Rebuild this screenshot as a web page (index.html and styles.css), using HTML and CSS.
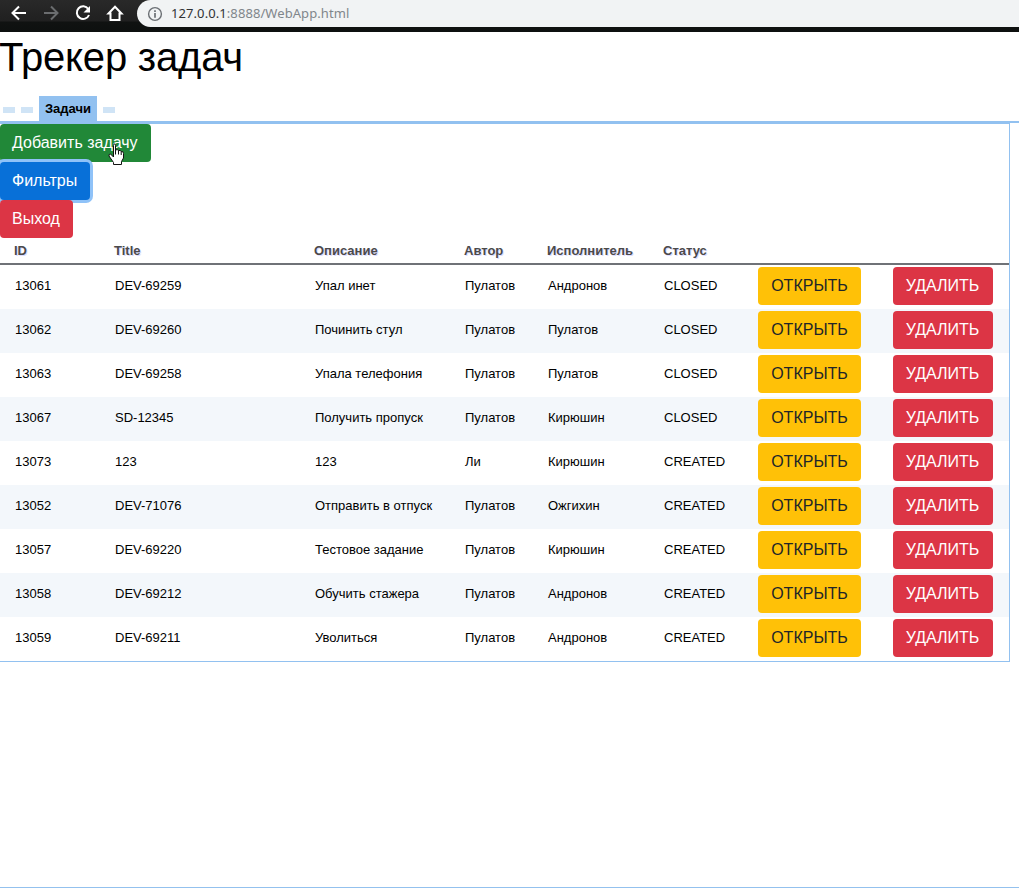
FILE: index.html
```html
<!DOCTYPE html>
<html lang="ru">
<head>
<meta charset="utf-8">
<title>Трекер задач</title>
<link rel="stylesheet" href="styles.css">
</head>
<body>
<header class="browser">
  <svg class="nav" width="137" height="27" viewBox="0 0 137 27" fill="none" stroke="#fff" stroke-width="2">
    <path d="M26 13H13M19 6.500L12.500 13L19 19.500"/>
    <path stroke="#6b6d6f" d="M44 13H57M51 6.500L57.500 13L51 19.500"/>
    <path d="M88.300 9A6.300 6.300 0 1 0 89 15"/>
    <path fill="#fff" stroke="none" d="M90 6V12.500H83.500Z"/>
    <path d="M108.500 13.500H110.500V20H119.500V13.500H121.500L115 6.800Z"/>
  </svg>
  <div class="address">
    <svg width="16" height="16" viewBox="0 0 16 16" fill="none" stroke="#6b6f74"><circle cx="8" cy="8" r="6.400" stroke-width="1.400"/><path stroke-width="1.700" d="M8 7V11.700M8 4.300V6"/></svg>
    <span class="url"><b>127.0.0.1</b>:8888/WebApp.html</span>
  </div>
</header>
<h1 class="title">Трекер задач</h1>
<main class="content">
  <nav class="tabs"><i class="stub"></i><i class="stub"></i><span class="tab">Задачи</span><i class="stub"></i></nav>
  <section class="panel">
    <div class="actions">
      <button class="btn add">Добавить задачу</button>
      <button class="btn filter">Фильтры</button>
      <button class="btn danger">Выход</button>
      <svg class="cursor" width="18" height="23" viewBox="0 0 18 23" fill="#fff" stroke="#111" stroke-width="1"><path d="M5.500 14V2.500Q5.500 1 6.500 1T7.500 2.500V7Q9.500 6 10.500 7.500Q12.500 7 13.200 8.500Q15.500 8 15.500 10.500V15L13.500 18.500V21.500H5.500V19.500L1 13Q0.500 11 2.500 11L5.500 14M7.500 7V11.500M10.500 7.500V11.500M13.200 8.500V12"/></svg>
    </div>
    <table class="tasks">
      <colgroup><col class="c-id"><col class="c-title"><col class="c-desc"><col class="c-author"><col class="c-worker"><col class="c-status"><col class="c-open"><col></colgroup>
      <thead><tr><th>ID</th><th>Title</th><th>Описание</th><th>Автор</th><th>Исполнитель</th><th>Статус</th><th></th><th></th></tr></thead>
      <tbody>
        <tr><td>13061</td><td>DEV-69259</td><td>Упал инет</td><td>Пулатов</td><td>Андронов</td><td>CLOSED</td><td><button class="btn open">ОТКРЫТЬ</button></td><td><button class="btn danger remove">УДАЛИТЬ</button></td></tr>
        <tr><td>13062</td><td>DEV-69260</td><td>Починить стул</td><td>Пулатов</td><td>Пулатов</td><td>CLOSED</td><td><button class="btn open">ОТКРЫТЬ</button></td><td><button class="btn danger remove">УДАЛИТЬ</button></td></tr>
        <tr><td>13063</td><td>DEV-69258</td><td>Упала телефония</td><td>Пулатов</td><td>Пулатов</td><td>CLOSED</td><td><button class="btn open">ОТКРЫТЬ</button></td><td><button class="btn danger remove">УДАЛИТЬ</button></td></tr>
        <tr><td>13067</td><td>SD-12345</td><td>Получить пропуск</td><td>Пулатов</td><td>Кирюшин</td><td>CLOSED</td><td><button class="btn open">ОТКРЫТЬ</button></td><td><button class="btn danger remove">УДАЛИТЬ</button></td></tr>
        <tr><td>13073</td><td>123</td><td>123</td><td>Ли</td><td>Кирюшин</td><td>CREATED</td><td><button class="btn open">ОТКРЫТЬ</button></td><td><button class="btn danger remove">УДАЛИТЬ</button></td></tr>
        <tr><td>13052</td><td>DEV-71076</td><td>Отправить в отпуск</td><td>Пулатов</td><td>Ожгихин</td><td>CREATED</td><td><button class="btn open">ОТКРЫТЬ</button></td><td><button class="btn danger remove">УДАЛИТЬ</button></td></tr>
        <tr><td>13057</td><td>DEV-69220</td><td>Тестовое задание</td><td>Пулатов</td><td>Кирюшин</td><td>CREATED</td><td><button class="btn open">ОТКРЫТЬ</button></td><td><button class="btn danger remove">УДАЛИТЬ</button></td></tr>
        <tr><td>13058</td><td>DEV-69212</td><td>Обучить стажера</td><td>Пулатов</td><td>Андронов</td><td>CREATED</td><td><button class="btn open">ОТКРЫТЬ</button></td><td><button class="btn danger remove">УДАЛИТЬ</button></td></tr>
        <tr><td>13059</td><td>DEV-69211</td><td>Уволиться</td><td>Пулатов</td><td>Андронов</td><td>CREATED</td><td><button class="btn open">ОТКРЫТЬ</button></td><td><button class="btn danger remove">УДАЛИТЬ</button></td></tr>
      </tbody>
    </table>
  </section>
</main>
</body>
</html>
```

FILE: styles.css
```css
* { box-sizing: border-box; }
body {
  margin: 0;
  height: 890px;
  overflow: hidden;
  display: flex;
  flex-direction: column;
  background: #fff;
  color: #000;
  font-family: "Liberation Sans", Arial, sans-serif;
  font-size: 13px;
}
.browser {
  height: 32px;
  flex: none;
  display: flex;
  align-items: flex-start;
  background: linear-gradient(#292929 0, #202020 21px, #101211 22px, #0d100f 100%);
}
.nav { flex: none; }
.address {
  flex: 1;
  height: 27px;
  display: flex;
  align-items: center;
  gap: 8px;
  padding-left: 10px;
  background: #f1f3f4;
  border-radius: 14px 0 0 14px;
}
.url {
  font-family: "Noto Sans", "Open Sans", sans-serif;
  font-size: 13px;
  line-height: 26px;
  padding-bottom: 2px;
  letter-spacing: 0.08px;
  color: #80868b;
  white-space: nowrap;
}
.url b { font-weight: 400; color: #303235; }
.title {
  flex: none;
  margin: 0;
  height: 64px;
  font-size: 40px;
  line-height: 50px;
  letter-spacing: -0.2px;
  text-indent: -1px;
  font-weight: 400;
}
.content { height: 792px; border-bottom: 1px solid #93c1ee; }
.tabs {
  height: 27px;
  display: flex;
  align-items: flex-start;
  padding-left: 3px;
  gap: 6px;
  border-bottom: 2px solid #92c1f0;
}
.stub { width: 12px; height: 6px; margin-top: 11px; background: #d0e4f6; }
.tab {
  width: 58px;
  height: 25px;
  line-height: 25px;
  text-align: center;
  font-weight: 700;
  background: #92c1f0;
}
.panel {
  width: 1010px;
  border: 1px solid #92c1f0;
  border-left: 0;
}
.actions {
  position: relative;
  display: flex;
  flex-direction: column;
  align-items: flex-start;
}
.btn {
  display: block;
  height: 38px;
  padding: 0 13px 0 12px;
  border: 0;
  border-radius: 4px;
  font: 16px/24px "Liberation Sans", Arial, sans-serif;
  color: #fff;
  text-align: left;
  white-space: nowrap;
}
.add { width: 151px; background: #218838; }
.filter {
  width: 90px;
  position: relative;
  background: #0870d8;
  box-shadow: 0 0 0 3px #8fc2f8;
}
.danger { width: 73px; background: #dc3545; position: relative; }
.cursor { position: absolute; left: 108px; top: 19px; }
.tasks { width: 1009px; table-layout: fixed; border-collapse: separate; border-spacing: 0; }
.c-id { width: 100px; }
.c-title { width: 200px; }
.c-desc { width: 150px; }
.c-author { width: 83px; }
.c-worker { width: 116px; }
.c-status { width: 94px; }
.c-open { width: 135px; }
th {
  height: 27px;
  padding: 0 0 1px 14px;
  text-align: left;
  color: #4b4a4a;
  text-shadow: #ddf 1px 1px 0;
  border-bottom: 2px solid #6f7277;
}
td { height: 44px; padding: 0 0 3px 15px; white-space: nowrap; }
td:nth-child(n+7) { padding-bottom: 2px; }
tbody tr:nth-child(even) { background: #f3f7fb; }
.btn.open { width: 103px; padding: 0; text-align: center; background: #ffc107; color: #212529; }
.remove { width: 100px; padding: 0 1px 0 0; text-align: center; }
```
